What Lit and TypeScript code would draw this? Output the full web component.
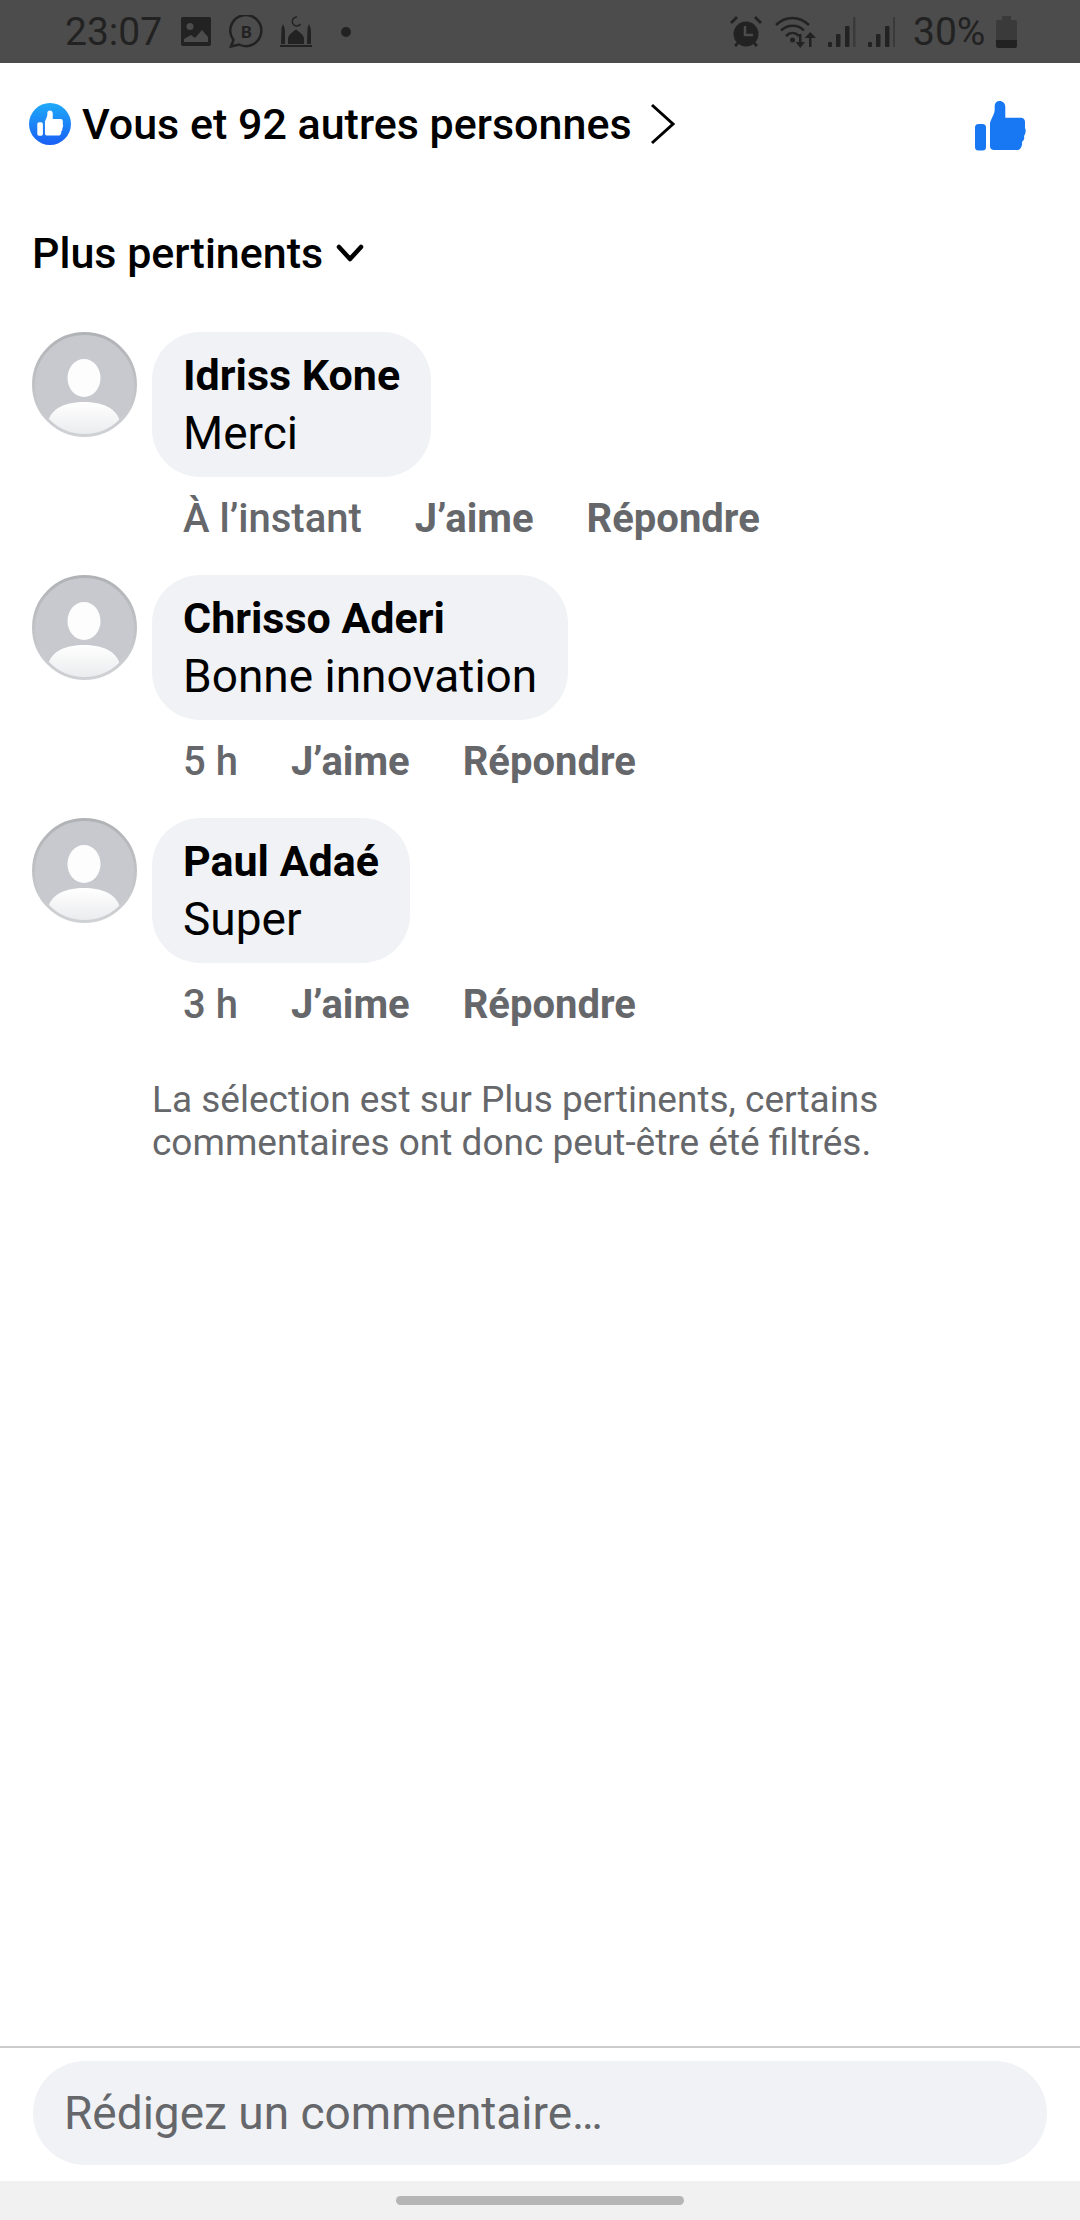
import { LitElement, html, css, svg } from "lit";
import { customElement } from "lit/decorators.js";

const comments = [
  { name: "Idriss Kone", text: "Merci", time: "À l’instant" },
  { name: "Chrisso Aderi", text: "Bonne innovation", time: "5 h" },
  { name: "Paul Adaé", text: "Super", time: "3 h" },
];

const thumb = svg`<path d="M15 45V23C15 19 19 15 19.700 9V5C19.700 2 21.500 0 24.500 0C28 0 30.300 2.500 30.300 6V16.700H46C48.500 16.700 50 18.500 50 21V27C51 29 51 32 49 35C49.500 37 49.500 39 47 41C47.500 44 46 49 42 49H19.700C17 49 15 48 15 45Z"/><rect x="0" y="23" width="11" height="26.500" rx="3.500"/>`;

const signal = svg`<rect x="0" y="25" width="4" height="5" rx="1"/><rect x="8" y="17" width="4.500" height="13" rx="1"/><rect x="17" y="9" width="4.500" height="21" rx="1"/><rect x="25" y="0" width="2.500" height="30" fill="#3a3a3a"/>`;

@customElement("app-root")
export class AppRoot extends LitElement {
  static styles = css`
    :host { display: block; width: 1080px; height: 2220px; background: #fff; font-family: Roboto, sans-serif; color: #000; overflow: hidden; }
    .page { display: flex; flex-direction: column; height: 2220px; }
    .status { height: 63px; flex: none; background: #4c4c4c; color: #222; display: flex; align-items: center; justify-content: space-between; padding: 0 63px 0 65px; font-size: 39px; box-sizing: border-box; }
    .status-left, .status-right { display: flex; align-items: center; height: 100%; }
    .time { width: 116px; }
    .pct { margin: 0 13px 0 18px; width: 70px; white-space: nowrap; }
    .status svg { display: block; fill: #222; flex: none; }
    .g17 { margin-left: 17px; }
    .g18 { margin-left: 18px; }
    .g29 { margin-left: 29px; }
    .g13 { margin-left: 13px; }
    .g12 { margin-left: 12px; }
    .likes { height: 122px; flex: none; display: flex; align-items: center; padding: 0 54px 0 29px; box-sizing: border-box; }
    .like-badge { width: 42px; height: 42px; margin-right: 11px; flex: none; }
    .likes-text { font-size: 43px; font-weight: 500; color: #000; }
    .chev-right { width: 26px; height: 42px; margin-left: 18px; fill: none; stroke: #000; stroke-width: 3; flex: none; }
    .spacer { flex: 1; }
    .big-thumb { width: 51px; height: 50px; margin-top: 4px; fill: #1877f2; flex: none; }
    .sort { display: flex; align-items: center; padding: 0 32px; height: 60px; margin-top: 38px; font-size: 43px; font-weight: 500; color: #000; flex: none; }
    .sort svg { width: 28px; height: 18px; margin-left: 13px; fill: none; stroke: #000; stroke-width: 4.500; stroke-linecap: round; stroke-linejoin: round; }
    .list { display: flex; flex-direction: column; gap: 36px; padding: 49px 33px 0 32px; flex: none; }
    .comment { display: flex; gap: 15px; align-items: flex-start; }
    .avatar { width: 105px; height: 105px; flex: none; display: block; }
    .body { display: flex; flex-direction: column; align-items: flex-start; }
    .bubble { background: #f0f2f5; border-radius: 48px; padding: 19px 31px 0; height: 145px; box-sizing: border-box; }
    .name { font-size: 43px; font-weight: 700; line-height: 48px; color: #000; white-space: nowrap; }
    .text { font-size: 46px; font-weight: 400; line-height: 50px; margin-top: 9px; white-space: nowrap; }
    .meta { display: flex; gap: 53px; margin: 22px 0 0 31px; font-size: 40px; font-weight: 700; line-height: 40px; color: #65676b; white-space: nowrap; }
    .meta .t { font-weight: 500; }
    .note { margin: 53px 33px 0 152px; font-size: 37px; line-height: 43px; color: #65676b; flex: none; }
    .bottom { margin-top: auto; flex: none; }
    .compose { border-top: 2px solid #ccc; height: 135px; box-sizing: border-box; padding: 13px 33px 0; background: #fff; }
    .input { height: 104px; border-radius: 52px; background: #f0f2f5; display: flex; align-items: center; padding: 0 31px; font-size: 46px; color: #65676b; }
    .nav { height: 39px; background: #f1f1f1; display: flex; justify-content: center; padding-top: 15px; box-sizing: border-box; }
    .handle { width: 288px; height: 9px; border-radius: 5px; background: #b5b5b5; }
  `;

  private avatar(i: number) {
    return html`<svg class="avatar" viewBox="0 0 105 105">
      <defs>
        <clipPath id="c${i}"><circle cx="52.500" cy="52.500" r="51"/></clipPath>
        <linearGradient id="g${i}" x1="0" y1="0" x2="0" y2="1"><stop offset="0" stop-color="#fff"/><stop offset="1" stop-color="#e9eaec"/></linearGradient>
        <linearGradient id="r${i}" x1="0" y1="0" x2="0" y2="1"><stop offset="0" stop-color="#b0b2b6"/><stop offset="1" stop-color="#cfd1d4"/></linearGradient>
      </defs>
      <circle cx="52.500" cy="52.500" r="51" fill="#c7c9cf"/>
      <g clip-path="url(#c${i})">
        <ellipse cx="52" cy="46" rx="16.500" ry="19" fill="#fdfdfe"/>
        <path d="M16 90c3-14 18-20 36-20s33 6 36 20v15H16z" fill="url(#g${i})"/>
      </g>
      <circle cx="52.500" cy="52.500" r="51" fill="none" stroke="url(#r${i})" stroke-width="3"/>
    </svg>`;
  }

  render() {
    return html`<div class="page">
      <div class="status">
        <div class="status-left">
          <span class="time">23:07</span>
          <svg width="30" height="29" viewBox="0 0 30 29"><path fill-rule="evenodd" d="M2 0h26a2 2 0 0 1 2 2v25a2 2 0 0 1-2 2H2a2 2 0 0 1-2-2V2a2 2 0 0 1 2-2zM9 6a3.500 3.500 0 1 0 0 7 3.500 3.500 0 0 0 0-7zM3 22v3h24v-5l-6-7-7 8-4-3z"/></svg>
          <svg class="g18" width="34" height="33" viewBox="0 0 34 33"><path fill="none" stroke="#222" stroke-width="2.500" d="M2 31.500l2.500-6.500A15.500 15.500 0 1 1 10 29.500z"/><text x="17.500" y="22.500" text-anchor="middle" font-family="Roboto" font-size="17" font-weight="700" fill="#222">B</text></svg>
          <svg class="g17" width="32" height="31" viewBox="0 0 32 31"><path d="M1.500 12l1.500-4 1.500 4 .5 3v13H1zM27.500 12l1.500-4 1.500 4 .5 3v13h-4zM8 28v-5c0-4 4-6.500 8-9.500 4 3 8 5.500 8 9.500v5zM0 29h32v2H0z"/><path fill="none" stroke="#222" stroke-width="1.500" d="M17 1a4.500 4.500 0 1 0 3.500 7"/></svg>
          <svg class="g29" width="10" height="10" viewBox="0 0 10 10"><circle cx="5" cy="5" r="5"/></svg>
        </div>
        <div class="status-right">
          <svg width="32" height="32" viewBox="0 0 32 32"><circle cx="16" cy="18" r="12.500"/><path d="M0 6l6-6 2 2-6 6zM32 6l-6-6-2 2 6 6zM4 29l3-3 2 2-3 3zM28 29l-3-3-2 2 3 3z"/><path fill="none" stroke="#4c4c4c" stroke-width="2.500" d="M15 10v9h8"/></svg>
          <svg class="g13" width="41" height="32" viewBox="0 0 41 32"><g fill="none" stroke="#222" stroke-width="2.500"><path d="M1 9c9.500-9.500 23-9.500 33 0M6 14.500c6.500-6.500 17-6.500 23 0M11 20c4-4 9-4 13 0"/></g><circle cx="17.500" cy="24" r="2.500"/><path d="M24 18h2.500v8H30l-4.700 6-4.700-6H24zM34 31h2.500v-9H41l-5.700-6-5.700 6H34z"/></svg>
          <svg class="g12" width="27.500" height="30" viewBox="0 0 27.500 30">${signal}</svg>
          <svg class="g12" width="27.500" height="30" viewBox="0 0 27.500 30">${signal}</svg>
          <span class="pct">30%</span>
          <svg width="21" height="32" viewBox="0 0 21 32"><path fill="#3a3a3a" d="M6 0h9v4h4a2 2 0 0 1 2 2v19H0V6a2 2 0 0 1 2-2h4z"/><path d="M0 24h21v6a2 2 0 0 1-2 2H2a2 2 0 0 1-2-2z"/></svg>
        </div>
      </div>

      <div class="likes">
        <svg class="like-badge" viewBox="0 0 42 42">
          <defs><linearGradient id="lb" x1="0" y1="0" x2="0" y2="1"><stop offset="0" stop-color="#1eaaf8"/><stop offset="1" stop-color="#1a5ff5"/></linearGradient></defs>
          <circle cx="21" cy="21" r="21" fill="url(#lb)"/>
          <g fill="#fff" transform="translate(8.300,7.500) scale(0.510)">${thumb}</g>
        </svg>
        <span class="likes-text">Vous et 92 autres personnes</span>
        <svg class="chev-right" viewBox="0 0 26 42"><path d="M2 2l21 19L2 40"/></svg>
        <span class="spacer"></span>
        <svg class="big-thumb" viewBox="0 0 51 50">${thumb}</svg>
      </div>

      <div class="sort">Plus pertinents<svg viewBox="0 0 28 18"><path d="M3 3l11 12L25 3"/></svg></div>

      <div class="list">
        ${comments.map((c, i) => html`<div class="comment">
          ${this.avatar(i)}
          <div class="body">
            <div class="bubble"><div class="name">${c.name}</div><div class="text">${c.text}</div></div>
            <div class="meta"><span class="t">${c.time}</span><span>J’aime</span><span>Répondre</span></div>
          </div>
        </div>`)}
      </div>

      <div class="note">La sélection est sur Plus pertinents, certains<br>commentaires ont donc peut-être été filtrés.</div>

      <div class="bottom">
        <div class="compose"><div class="input">Rédigez un commentaire…</div></div>
        <div class="nav"><div class="handle"></div></div>
      </div>
    </div>`;
  }
}
